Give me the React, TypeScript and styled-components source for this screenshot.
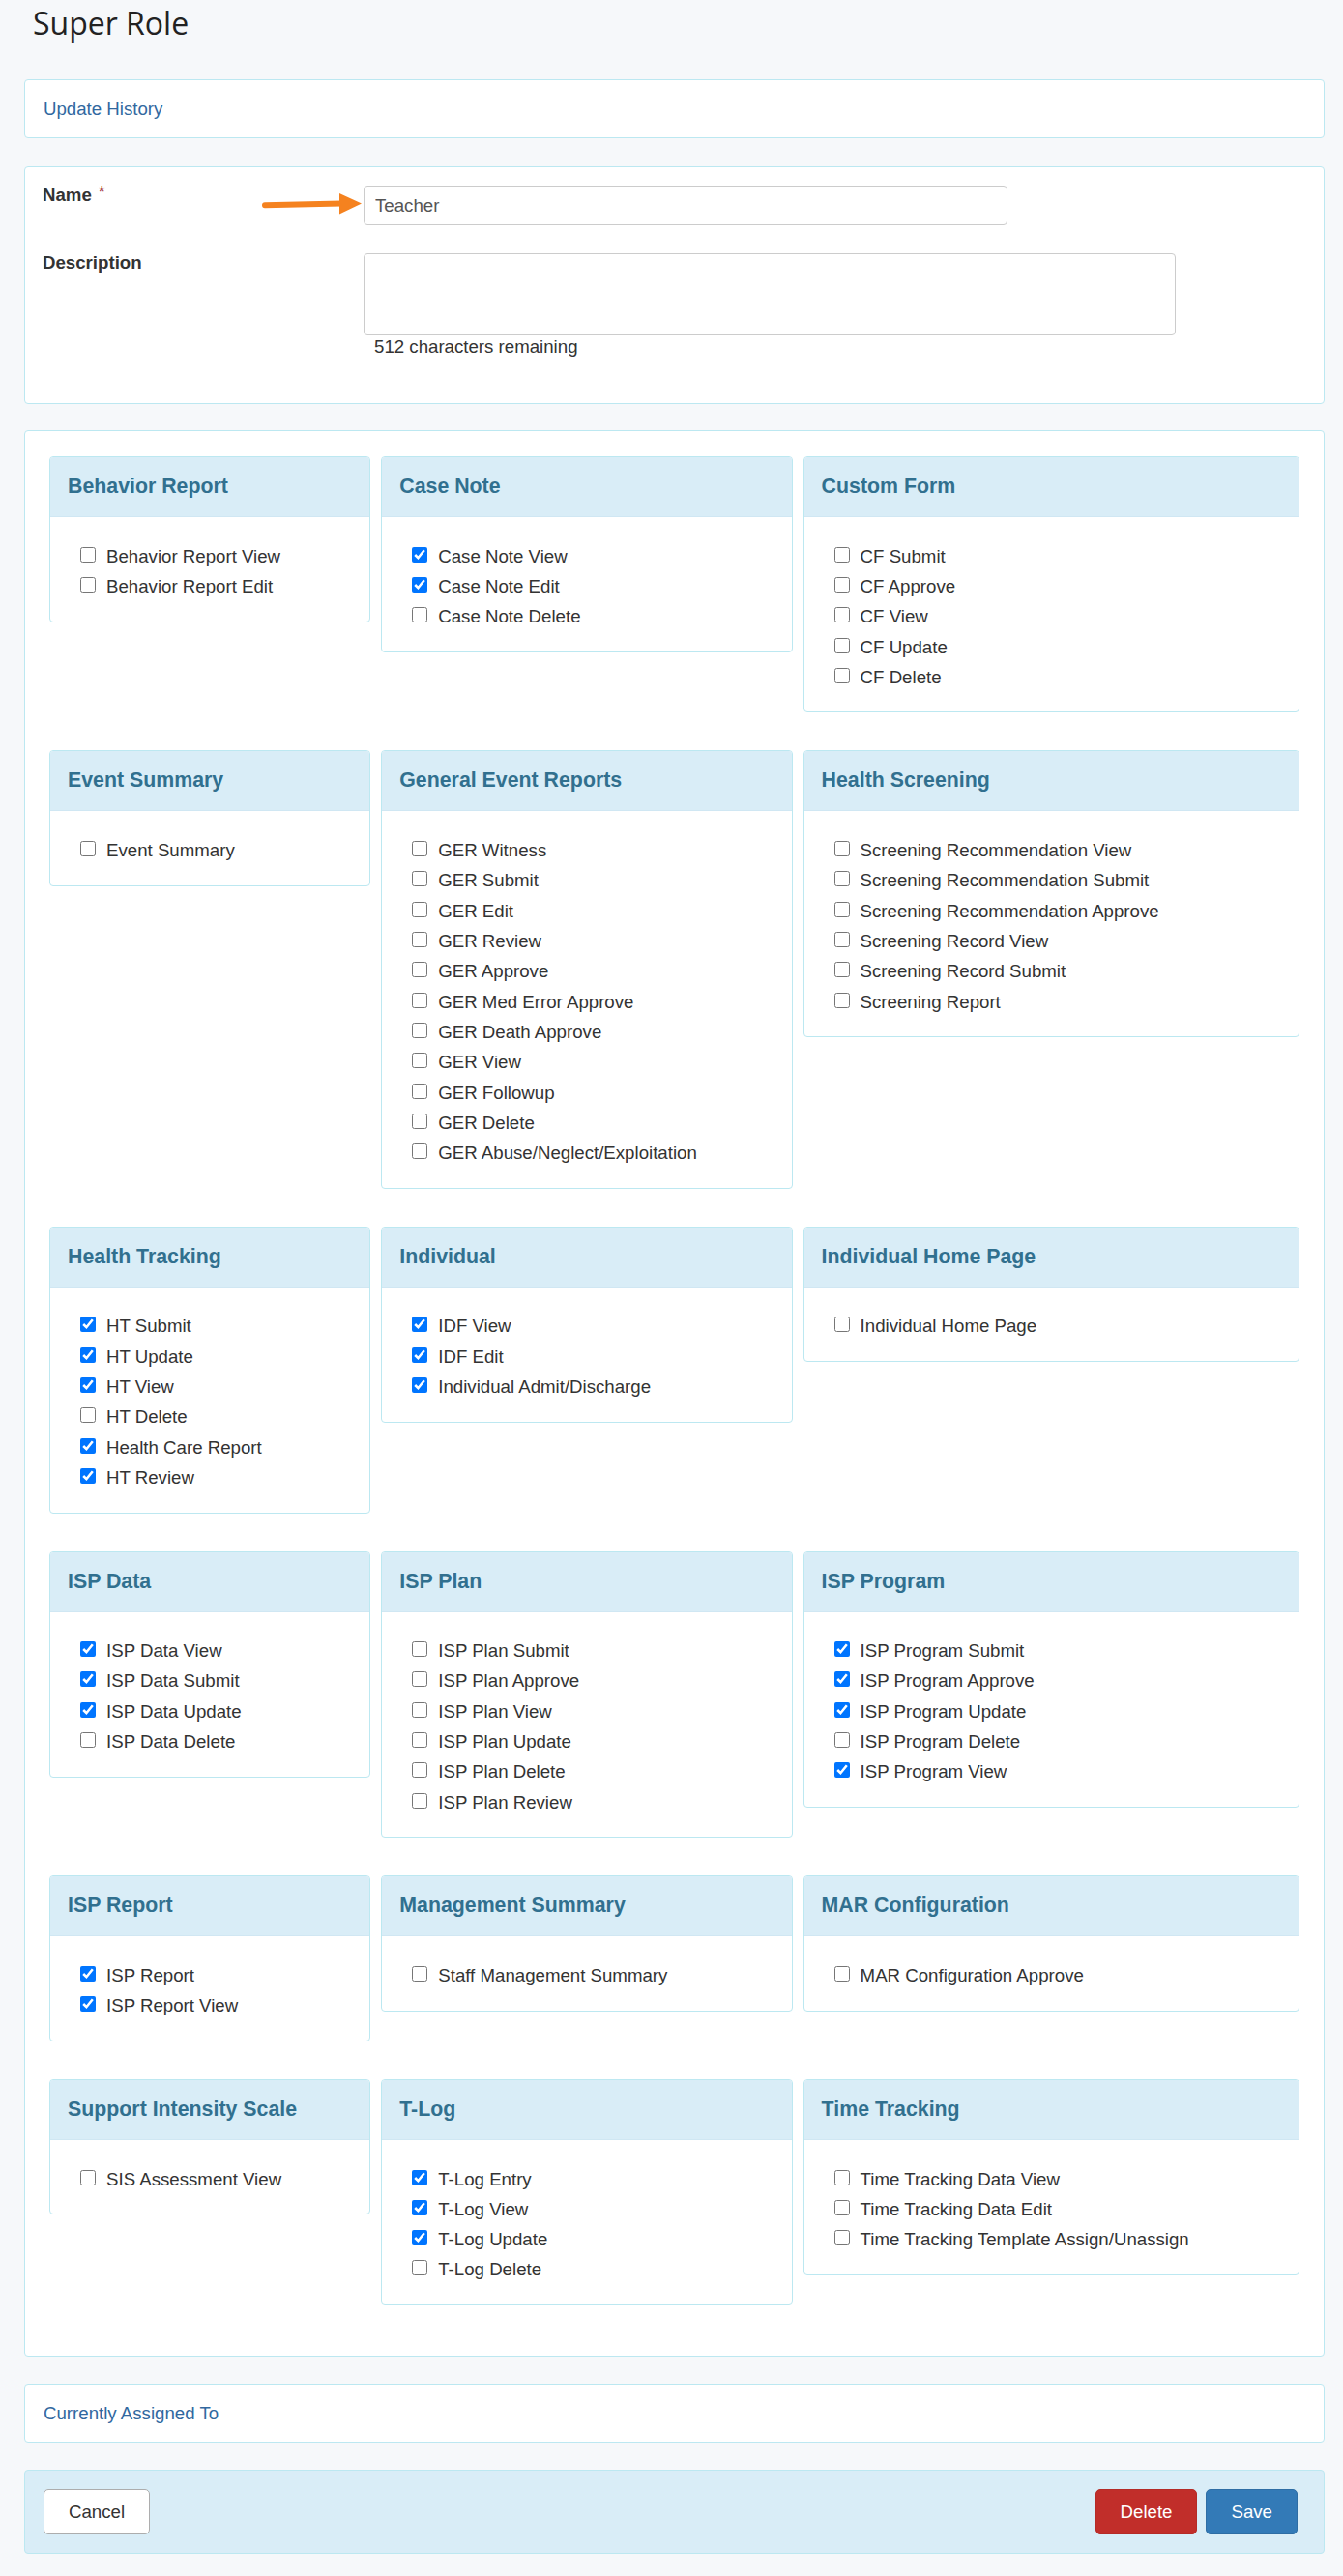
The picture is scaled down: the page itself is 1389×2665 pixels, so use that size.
import styled, { createGlobalStyle } from 'styled-components';

const GlobalStyle = createGlobalStyle`
  html, body {
    margin: 0;
    padding: 0;
    background: #f6f8fa;
  }
  body {
    font-family: "Liberation Sans", Arial, sans-serif;
    font-size: 18.67px;
    color: #333;
  }
  * {
    box-sizing: border-box;
  }
`;

const Page = styled.div`
  padding: 4px 19px 23px 25px;
`;

const Title = styled.h1`
  margin: 0 0 38px 9px;
  font-family: "Open Sans", sans-serif;
  font-weight: 400;
  font-size: 32px;
  line-height: 40px;
  color: #222;
`;

const Card = styled.div<{ $gap: number }>`
  background: #fff;
  border: 1px solid #bce8f1;
  border-radius: 4px;
  margin-bottom: ${props => props.$gap}px;
`;

const LinkCard = styled(Card)`
  height: 61px;
  display: flex;
  align-items: center;
  padding: 0 19px;
`;

const CardLink = styled.a`
  color: #31689f;
  text-decoration: none;
  font-size: 18.67px;
  cursor: pointer;
`;

const FormCard = styled(Card)`
  padding: 16px 19px 46px 18px;
`;

const FormRow = styled.div<{ $spacing: number }>`
  display: grid;
  grid-template-columns: 332px 1fr;
  margin-bottom: ${props => props.$spacing}px;
`;

const LabelCell = styled.div`
  position: relative;
  line-height: 26px;
`;

const FieldLabel = styled.label`
  font-weight: 700;
  font-size: 18.67px;
  color: #333;
`;

const Required = styled.span`
  color: #a94442;
  font-weight: 400;
  font-size: 18px;
  line-height: 18px;
  vertical-align: 3px;
  margin-left: 7px;
`;

const PointerArrow = styled.svg`
  position: absolute;
  left: 227px;
  top: 10px;
`;

const TextInput = styled.input`
  margin-top: 3px;
  width: 666px;
  height: 41px;
  padding: 0 11px;
  border: 1px solid #ccc;
  border-radius: 4px;
  font-family: "Liberation Sans", Arial, sans-serif;
  font-size: 18.67px;
  color: #555;
  background: #fff;
  outline: none;
`;

const TextArea = styled.textarea`
  display: block;
  margin-top: 3px;
  width: 840px;
  height: 85px;
  padding: 8px 11px;
  border: 1px solid #ccc;
  border-radius: 4px;
  font-family: "Liberation Sans", Arial, sans-serif;
  font-size: 18.67px;
  resize: none;
  outline: none;
`;

const HelpText = styled.div`
  padding-left: 11px;
  line-height: 24px;
  font-size: 18.67px;
  color: #333;
`;

const PermissionCard = styled(Card)`
  padding: 26px 25px 52px;
`;

const PanelGrid = styled.div`
  display: grid;
  grid-template-columns: 332fr 425fr 513fr;
  column-gap: 11px;
  row-gap: 39px;
  align-items: start;
`;

const Panel = styled.div`
  border: 1px solid #bce8f1;
  border-radius: 4px;
  background: #fff;
  overflow: hidden;
`;

const PanelHeading = styled.div`
  height: 62px;
  display: flex;
  align-items: center;
  padding: 0 18px;
  background: #d9edf7;
  border-bottom: 1px solid #d0e7f3;
`;

const PanelTitle = styled.h3`
  margin: 0;
  font-size: 21.33px;
  font-weight: 700;
  color: #31708f;
`;

const PanelBody = styled.div`
  padding: 25px 18px 20px 31px;
`;

const PermissionRow = styled.label`
  display: flex;
  align-items: center;
  gap: 11px;
  height: 31.3px;
  font-size: 18.67px;
  color: #333;
`;

const Check = styled.input`
  width: 16px;
  height: 16px;
  margin: -4px 0 0 0;
  accent-color: #0075ff;
  flex-shrink: 0;
`;

const ActionBar = styled.div`
  display: flex;
  justify-content: space-between;
  align-items: center;
  height: 87px;
  padding: 0 27px 0 19px;
  background: #d9edf7;
  border: 1px solid #bce8f1;
  border-radius: 4px;
`;

const ButtonGroup = styled.div`
  display: flex;
  gap: 9px;
`;

const Button = styled.button<{ $variant: 'default' | 'danger' | 'primary' }>`
  height: 47px;
  padding: 0 25px;
  border-radius: 5px;
  font-family: "Liberation Sans", Arial, sans-serif;
  font-size: 18.67px;
  cursor: pointer;
  border: 1px solid ${props =>
    props.$variant === 'danger' ? '#b52b27' : props.$variant === 'primary' ? '#2e6da4' : '#adadad'};
  background: ${props =>
    props.$variant === 'danger' ? '#c12e2a' : props.$variant === 'primary' ? '#337ab7' : '#fff'};
  color: ${props => (props.$variant === 'default' ? '#333' : '#fff')};
`;

type Permission = [string, boolean];

const sections: { title: string; items: Permission[] }[] = [
  { title: 'Behavior Report', items: [['Behavior Report View', false], ['Behavior Report Edit', false]] },
  { title: 'Case Note', items: [['Case Note View', true], ['Case Note Edit', true], ['Case Note Delete', false]] },
  {
    title: 'Custom Form',
    items: [['CF Submit', false], ['CF Approve', false], ['CF View', false], ['CF Update', false], ['CF Delete', false]],
  },
  { title: 'Event Summary', items: [['Event Summary', false]] },
  {
    title: 'General Event Reports',
    items: [
      ['GER Witness', false],
      ['GER Submit', false],
      ['GER Edit', false],
      ['GER Review', false],
      ['GER Approve', false],
      ['GER Med Error Approve', false],
      ['GER Death Approve', false],
      ['GER View', false],
      ['GER Followup', false],
      ['GER Delete', false],
      ['GER Abuse/Neglect/Exploitation', false],
    ],
  },
  {
    title: 'Health Screening',
    items: [
      ['Screening Recommendation View', false],
      ['Screening Recommendation Submit', false],
      ['Screening Recommendation Approve', false],
      ['Screening Record View', false],
      ['Screening Record Submit', false],
      ['Screening Report', false],
    ],
  },
  {
    title: 'Health Tracking',
    items: [
      ['HT Submit', true],
      ['HT Update', true],
      ['HT View', true],
      ['HT Delete', false],
      ['Health Care Report', true],
      ['HT Review', true],
    ],
  },
  { title: 'Individual', items: [['IDF View', true], ['IDF Edit', true], ['Individual Admit/Discharge', true]] },
  { title: 'Individual Home Page', items: [['Individual Home Page', false]] },
  {
    title: 'ISP Data',
    items: [['ISP Data View', true], ['ISP Data Submit', true], ['ISP Data Update', true], ['ISP Data Delete', false]],
  },
  {
    title: 'ISP Plan',
    items: [
      ['ISP Plan Submit', false],
      ['ISP Plan Approve', false],
      ['ISP Plan View', false],
      ['ISP Plan Update', false],
      ['ISP Plan Delete', false],
      ['ISP Plan Review', false],
    ],
  },
  {
    title: 'ISP Program',
    items: [
      ['ISP Program Submit', true],
      ['ISP Program Approve', true],
      ['ISP Program Update', true],
      ['ISP Program Delete', false],
      ['ISP Program View', true],
    ],
  },
  { title: 'ISP Report', items: [['ISP Report', true], ['ISP Report View', true]] },
  { title: 'Management Summary', items: [['Staff Management Summary', false]] },
  { title: 'MAR Configuration', items: [['MAR Configuration Approve', false]] },
  { title: 'Support Intensity Scale', items: [['SIS Assessment View', false]] },
  {
    title: 'T-Log',
    items: [['T-Log Entry', true], ['T-Log View', true], ['T-Log Update', true], ['T-Log Delete', false]],
  },
  {
    title: 'Time Tracking',
    items: [
      ['Time Tracking Data View', false],
      ['Time Tracking Data Edit', false],
      ['Time Tracking Template Assign/Unassign', false],
    ],
  },
];

export default function App() {
  return (
    <Page>
      <GlobalStyle />
      <Title>Super Role</Title>

      <LinkCard $gap={29}>
        <CardLink>Update History</CardLink>
      </LinkCard>

      <FormCard $gap={27}>
        <FormRow $spacing={26}>
          <LabelCell>
            <FieldLabel>Name</FieldLabel>
            <Required>*</Required>
            {/* annotation arrow pointing at the name field */}
            <PointerArrow width="106" height="24" viewBox="0 0 106 24">
              <path d="M3 13.2 L82 11.6" stroke="#f5821f" strokeWidth="6" strokeLinecap="round" />
              <path d="M80 1 L103 11.6 L80 22.5 Z" fill="#f5821f" />
            </PointerArrow>
          </LabelCell>
          <div>
            <TextInput defaultValue="Teacher" />
          </div>
        </FormRow>
        <FormRow $spacing={0}>
          <LabelCell>
            <FieldLabel>Description</FieldLabel>
          </LabelCell>
          <div>
            <TextArea />
            <HelpText>512 characters remaining</HelpText>
          </div>
        </FormRow>
      </FormCard>

      <PermissionCard $gap={28}>
        <PanelGrid>
          {sections.map(section => (
            <Panel key={section.title}>
              <PanelHeading>
                <PanelTitle>{section.title}</PanelTitle>
              </PanelHeading>
              <PanelBody>
                {section.items.map(([label, checked]) => (
                  <PermissionRow key={label}>
                    <Check type="checkbox" defaultChecked={checked} />
                    {label}
                  </PermissionRow>
                ))}
              </PanelBody>
            </Panel>
          ))}
        </PanelGrid>
      </PermissionCard>

      <LinkCard $gap={28}>
        <CardLink>Currently Assigned To</CardLink>
      </LinkCard>

      <ActionBar>
        <Button $variant="default">Cancel</Button>
        <ButtonGroup>
          <Button $variant="danger">Delete</Button>
          <Button $variant="primary">Save</Button>
        </ButtonGroup>
      </ActionBar>
    </Page>
  );
}
